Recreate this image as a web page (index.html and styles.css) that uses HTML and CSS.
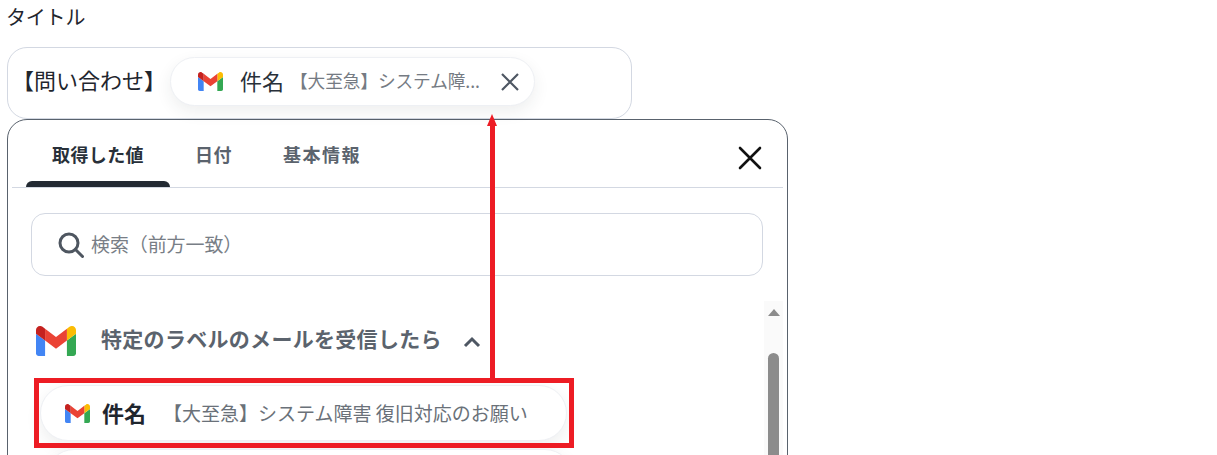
FILE: index.html
```html
<!DOCTYPE html>
<html lang="ja">
<head>
<meta charset="utf-8">
<title>タイトル</title>
<link rel="stylesheet" href="styles.css">
</head>
<body>
<svg class="defs" width="0" height="0" aria-hidden="true">
  <symbol id="gmail" viewBox="52 42 88 66">
    <path fill="#4285f4" d="M58 108h14V74L52 59v43c0 3.32 2.69 6 6 6"/>
    <path fill="#34a853" d="M120 108h14c3.32 0 6-2.69 6-6V59l-20 15"/>
    <path fill="#fbbc04" d="M120 48v26l20-15v-8c0-7.42-8.47-11.65-14.4-7.2"/>
    <path fill="#ea4335" d="M72 74V48l24 18 24-18v26L96 92"/>
    <path fill="#c5221f" d="M52 51v8l20 15V48l-5.6-4.2c-5.94-4.45-14.4-.22-14.4 7.2"/>
  </symbol>
</svg>
<main class="page">
  <div class="label">タイトル</div>
  <div class="field">
    <span class="field-text">【問い合わせ】</span>
    <div class="chip">
      <svg class="chip-logo"><use href="#gmail"/></svg>
      <span class="chip-name">件名</span>
      <span class="chip-value">【大至急】システム障...</span>
      <svg class="chip-x" viewBox="0 0 20 20"><path d="M2 2l16 16M18 2L2 18"/></svg>
    </div>
  </div>
  <section class="panel">
    <div class="tabs">
      <div class="tab tab-active">取得した値</div>
      <div class="tab tab-date">日付</div>
      <div class="tab tab-info">基本情報</div>
      <svg class="close" viewBox="0 0 24 24"><path d="M2 2l20 20M22 2L2 22"/></svg>
    </div>
    <div class="search">
      <svg class="search-icon" viewBox="0 0 26 26"><circle cx="11" cy="11" r="9"/><path d="M17.5 17.5l7 7"/></svg>
      <span class="search-text">検索（前方一致）</span>
    </div>
    <div class="body">
      <div class="list">
        <div class="group">
          <svg class="group-logo"><use href="#gmail"/></svg>
          <span class="group-title">特定のラベルのメールを受信したら</span>
          <svg class="chevron" viewBox="0 0 18 12"><path d="M2 10l7-7 7 7"/></svg>
        </div>
        <div class="item">
          <svg class="item-logo"><use href="#gmail"/></svg>
          <span class="item-name">件名</span>
          <span class="item-value">【大至急】システム障害 復旧対応のお願い</span>
        </div>
        <div class="item item-next"></div>
      </div>
      <div class="scrollbar">
        <div class="scroll-up"></div>
        <div class="scroll-thumb"></div>
      </div>
    </div>
  </section>
</main>
<div class="callout-box"></div>
<div class="callout-line"></div>
<div class="callout-head"></div>
</body>
</html>
```
FILE: styles.css
```css
* { box-sizing: border-box; }
html, body { margin: 0; height: 455px; overflow: hidden; background: #fff; }
body {
  position: relative;
  font-family: "Noto Sans CJK JP", "Noto Sans", sans-serif;
  color: #283039;
}
.defs { position: absolute; }
.page { padding: 0 0 0 7px; width: 800px; }
.label { height: 47px; padding-top: 3px; margin-left: -1px; font-size: 20px; line-height: 28px; letter-spacing: -.2px; color: #1f262e; }
.field {
  width: 625px; height: 72px;
  border: 1px solid #d3d8e2; border-radius: 20px;
  display: flex; align-items: flex-start;
  padding: 9px 0 0 0;
}
.field-text { font-size: 22px; line-height: 30px; margin-top: 7px; width: 162px; flex: none; padding-left: 4px; white-space: nowrap; color: #1f262e; }
.chip {
  width: 365px; height: 49px; border: 1px solid #eef0f4; border-radius: 25px;
  background: #fff; box-shadow: 0 6px 16px rgba(40,48,57,.08);
  display: flex; align-items: center; padding-left: 27px;
}
.chip-logo { width: 25px; height: 19px; flex: none; }
.chip-name { font-size: 22px; margin: -3px 0 0 17px; line-height: 1; width: 50px; flex: none; }
.chip-value { font-size: 17.7px; margin-top: -2px; color: #757b83; flex: none; width: 193px; white-space: nowrap; line-height: 1; letter-spacing: -.1px; }
.chip-x { width: 20px; height: 20px; margin-left: 17px; flex: none; fill: none; stroke: #4e5763; stroke-width: 2.2; }
.panel {
  width: 781px; height: 400px;
  border: 1px solid #59626d; border-radius: 20px;
  padding: 0 4px; background: #fff;
}
.tabs {
  height: 68px; border-bottom: 1px solid #d3d8e2;
  display: flex; align-items: flex-start; position: relative;
  font-size: 18px; font-weight: 700; color: #5b636d;
}
.tab { line-height: 26px; margin-top: 21px; letter-spacing: .4px; white-space: nowrap; }
.tab-active { width: 144px; height: 46px; margin-left: 14px; padding-left: 26px; color: #283039; position: relative; }
.tab-active::after {
  content: ""; position: absolute; left: 0; right: 0; bottom: 0; height: 6px;
  background: #232a33; border-radius: 6px 6px 0 0;
}
.tab-date { margin-left: 25px; width: 88px; }
.tab-info { letter-spacing: 1.5px; }
.close { width: 24px; height: 24px; margin: 26px 21px 0 auto; fill: none; stroke: #111; stroke-width: 2.6; stroke-linecap: round; }
.search {
  margin: 25px 0 0 19px; width: 732px; height: 63px;
  border: 1px solid #d3d8e2; border-radius: 14px;
  display: flex; align-items: center; padding-left: 26px;
  font-size: 19px; color: #787e86;
}
.search-icon { width: 26px; height: 26px; margin-right: 7px; flex: none; fill: none; stroke: #4e5660; stroke-width: 3; stroke-linecap: round; }
.search-text { margin-top: -2px; letter-spacing: -.1px; }
.body { display: flex; margin-top: 25px; padding-left: 22px; }
.list { width: 729px; flex: none; }
.group { height: 84px; display: flex; align-items: center; padding: 0 0 4px 2px; }
.group-logo { width: 40px; height: 30px; flex: none; }
.group-title { margin-left: 25px; padding-bottom: 6px; font-size: 21px; font-weight: 700; letter-spacing: .3px; color: #5b636d; white-space: nowrap; }
.chevron { width: 18px; height: 12px; margin-left: 21px; margin-top: 1px; fill: none; stroke: #4e5763; stroke-width: 3; }
.item {
  margin-left: 6px; width: 527px; height: 56px; border: 1px solid #eef0f4; border-radius: 28px;
  background: #fff; box-shadow: 0 6px 16px rgba(40,48,57,.08);
  display: flex; align-items: center; padding-left: 24px;
}
.item-logo { width: 25px; height: 19px; flex: none; }
.item-name { font-size: 22px; font-weight: 700; margin: -2px 0 0 12px; width: 61px; flex: none; color: #1f262e; line-height: 1; }
.item-value { font-size: 19px; margin-top: -2px; color: #6a7179; white-space: nowrap; line-height: 1; }
.item-next { margin-top: 8px; margin-left: 12px; }
.scrollbar { width: 19px; height: 160px; background: #fafafa; flex: none; padding-top: 8px; margin-left: 1px; }
.scroll-up { width: 0; height: 0; margin: 0 auto; border: 6px solid transparent; border-top: 0; border-bottom: 7px solid #8c8c8c; }
.scroll-thumb { width: 11px; height: 130px; margin: 37px auto 0; background: #8c8c8c; border-radius: 6px; }
.callout-box { position: absolute; left: 34px; top: 378px; width: 540px; height: 70px; border: 5px solid #ed1c24; }
.callout-line { position: absolute; left: 490px; top: 124px; width: 5px; height: 254px; background: #ed1c24; }
.callout-head { position: absolute; left: 487px; top: 114px; width: 0; height: 0; border: 5.5px solid transparent; border-top: 0; border-bottom: 12px solid #ed1c24; }
```
